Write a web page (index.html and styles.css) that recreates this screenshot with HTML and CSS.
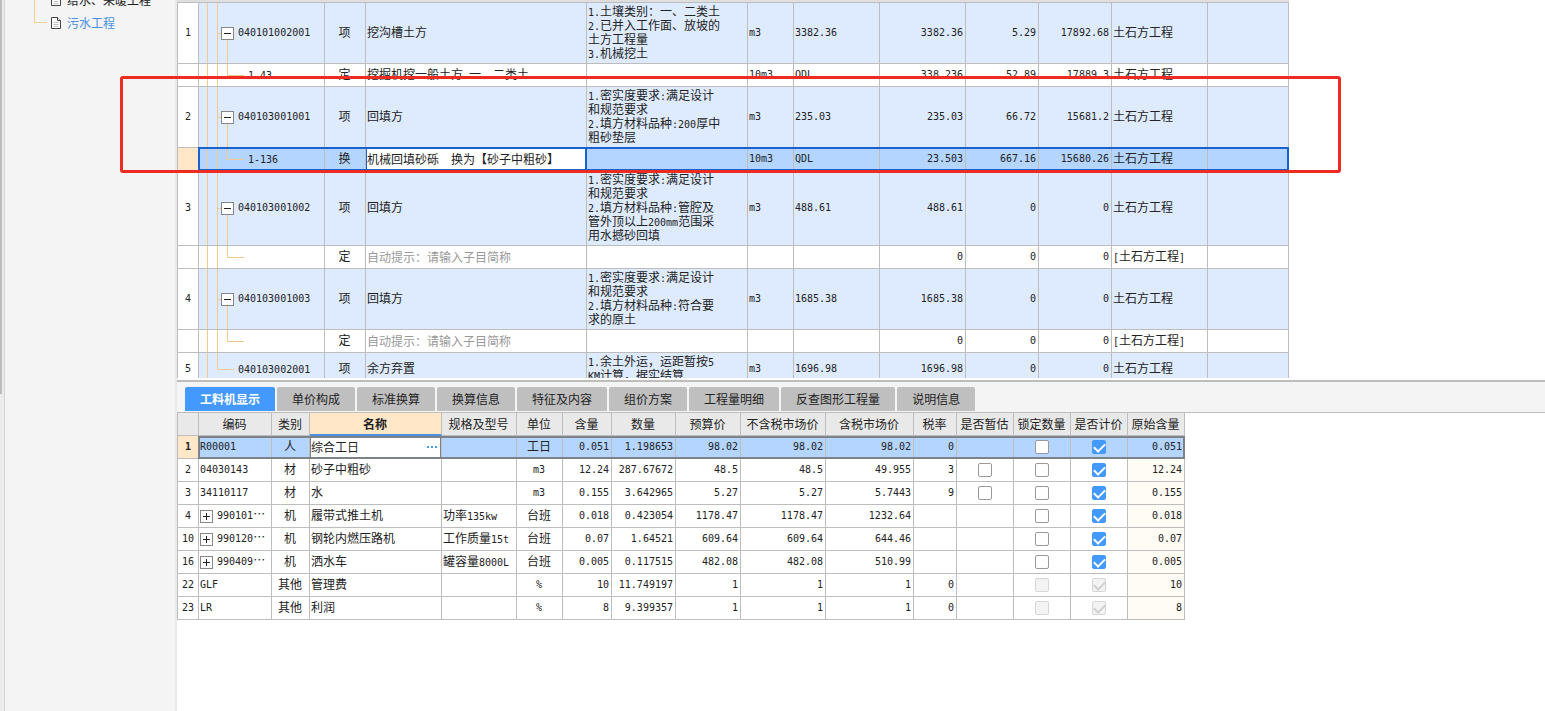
FILE: index.html
```html
<!DOCTYPE html>
<html lang="zh-CN">
<head>
<meta charset="utf-8">
<title>工程计价</title>
<link rel="stylesheet" href="styles.css">
</head>
<body>
<div class="app">
  <div class="rail"><div class="thumb"></div></div>
  <nav class="sidebar" aria-label="工程">
    <ul class="projects">
      <li class="branch"><svg class="doc" viewBox="0 0 10 12"><path d="M.5.5h6l3 3v8h-9z"/><path d="M6.500.5v3h3"/><path class="rule" d="M2.500 5.500h5M2.500 7.500h5M2.500 9.500h5"/></svg><a href="#heating">给水、采暖工程</a></li>
      <li class="branch last"><svg class="doc" viewBox="0 0 10 12"><path d="M.5.5h6l3 3v8h-9z"/><path d="M6.500.5v3h3"/><path class="rule" d="M2.500 5.500h5M2.500 7.500h5M2.500 9.500h5"/></svg><a class="current" href="#sewage">污水工程</a></li>
    </ul>
  </nav>
  <main class="content">
    <section class="bill">
      <div class="strip"></div>
      <table class="grid bill-grid">
        <colgroup><col class="w21"><col class="w126"><col class="w41"><col class="w221"><col class="w161"><col class="w46"><col class="w86"><col class="w86"><col class="w73"><col class="w73"><col class="w96"><col class="w81"></colgroup>
        <tbody>
          <tr class="item tall"><td class="idx">1</td><td class="tree parent"><button class="toggle minus" aria-label="折叠"></button><span class="m">040101002001</span></td><td class="mid">项</td><td>挖沟槽土方</td><td class="desc"><span class="m">1.</span>土壤类别：一、二类土<br><span class="m">2.</span>已并入工作面、放坡的<br>土方工程量<br><span class="m">3.</span>机械挖土</td><td class="m">m3</td><td class="m">3382.36</td><td class="m num">3382.36</td><td class="m num">5.29</td><td class="m num">17892.68</td><td>土石方工程</td><td></td></tr>
          <tr class="line"><td class="idx"></td><td class="tree child"><span class="m">1-43</span></td><td class="mid">定</td><td>挖掘机挖一般土方<span class="m"> </span>一、二类土</td><td></td><td class="m">10m3</td><td class="m">QDL</td><td class="m num">338.236</td><td class="m num">52.89</td><td class="m num">17889.3</td><td>土石方工程</td><td></td></tr>
          <tr class="item tall"><td class="idx">2</td><td class="tree parent"><button class="toggle minus" aria-label="折叠"></button><span class="m">040103001001</span></td><td class="mid">项</td><td>回填方</td><td class="desc"><span class="m">1.</span>密实度要求<span class="m">:</span>满足设计<br>和规范要求<br><span class="m">2.</span>填方材料品种<span class="m">:200</span>厚中<br>粗砂垫层</td><td class="m">m3</td><td class="m">235.03</td><td class="m num">235.03</td><td class="m num">66.72</td><td class="m num">15681.2</td><td>土石方工程</td><td></td></tr>
          <tr class="line selected"><td class="idx"></td><td class="tree child"><span class="m">1-136</span></td><td class="mid">换</td><td class="edit"><input type="text" aria-label="名称" value="机械回填砂砾　换为【砂子中粗砂】"></td><td></td><td class="m">10m3</td><td class="m">QDL</td><td class="m num">23.503</td><td class="m num">667.16</td><td class="m num">15680.26</td><td>土石方工程</td><td></td></tr>
          <tr class="item taller"><td class="idx">3</td><td class="tree parent"><button class="toggle minus" aria-label="折叠"></button><span class="m">040103001002</span></td><td class="mid">项</td><td>回填方</td><td class="desc"><span class="m">1.</span>密实度要求<span class="m">:</span>满足设计<br>和规范要求<br><span class="m">2.</span>填方材料品种<span class="m">:</span>管腔及<br>管外顶以上<span class="m">200mm</span>范围采<br>用水撼砂回填</td><td class="m">m3</td><td class="m">488.61</td><td class="m num">488.61</td><td class="m num">0</td><td class="m num">0</td><td>土石方工程</td><td></td></tr>
          <tr class="line"><td class="idx"></td><td class="tree child"></td><td class="mid">定</td><td class="hint"><input type="text" aria-label="子目简称" placeholder="自动提示：请输入子目简称"></td><td></td><td></td><td></td><td class="m num">0</td><td class="m num">0</td><td class="m num">0</td><td><span class="m">[</span>土石方工程<span class="m">]</span></td><td></td></tr>
          <tr class="item tall"><td class="idx">4</td><td class="tree parent"><button class="toggle minus" aria-label="折叠"></button><span class="m">040103001003</span></td><td class="mid">项</td><td>回填方</td><td class="desc"><span class="m">1.</span>密实度要求<span class="m">:</span>满足设计<br>和规范要求<br><span class="m">2.</span>填方材料品种<span class="m">:</span>符合要<br>求的原土</td><td class="m">m3</td><td class="m">1685.38</td><td class="m num">1685.38</td><td class="m num">0</td><td class="m num">0</td><td>土石方工程</td><td></td></tr>
          <tr class="line"><td class="idx"></td><td class="tree child"></td><td class="mid">定</td><td class="hint"><input type="text" aria-label="子目简称" placeholder="自动提示：请输入子目简称"></td><td></td><td></td><td></td><td class="m num">0</td><td class="m num">0</td><td class="m num">0</td><td><span class="m">[</span>土石方工程<span class="m">]</span></td><td></td></tr>
          <tr class="item short"><td class="idx">5</td><td class="tree leaf"><span class="m">040103002001</span></td><td class="mid">项</td><td>余方弃置</td><td class="desc"><span class="m">1.</span>余土外运，运距暂按<span class="m">5</span><br><span class="m">KM</span>计算，据实结算</td><td class="m">m3</td><td class="m">1696.98</td><td class="m num">1696.98</td><td class="m num">0</td><td class="m num">0</td><td>土石方工程</td><td></td></tr>
        </tbody>
      </table>
    </section>
    <section class="detail">
      <div class="tabs" role="tablist">
        <button role="tab" aria-selected="true" class="tab active">工料机显示</button>
        <button role="tab" class="tab">单价构成</button>
        <button role="tab" class="tab">标准换算</button>
        <button role="tab" class="tab">换算信息</button>
        <button role="tab" class="tab">特征及内容</button>
        <button role="tab" class="tab">组价方案</button>
        <button role="tab" class="tab">工程量明细</button>
        <button role="tab" class="tab">反查图形工程量</button>
        <button role="tab" class="tab">说明信息</button>
      </div>
      <table class="grid res-grid">
        <colgroup><col class="w21"><col class="w73"><col class="w38"><col class="w132"><col class="w75"><col class="w46"><col class="w49"><col class="w64"><col class="w65"><col class="w85"><col class="w88"><col class="w43"><col class="w57"><col class="w57"><col class="w57"><col class="w57"></colgroup>
        <thead>
          <tr><th></th><th>编码</th><th>类别</th><th class="sorted">名称</th><th>规格及型号</th><th>单位</th><th>含量</th><th>数量</th><th>预算价</th><th>不含税市场价</th><th>含税市场价</th><th>税率</th><th>是否暂估</th><th>锁定数量</th><th>是否计价</th><th>原始含量</th></tr>
        </thead>
        <tbody>
          <tr class="selected"><td class="idx">1</td><td class="m">R00001</td><td class="mid">人</td><td class="edit"><div class="field"><input type="text" aria-label="名称" value="综合工日"><button class="more" aria-label="更多"><i></i><i></i><i></i></button></div></td><td></td><td class="mid">工日</td><td class="m num">0.051</td><td class="m num">1.198653</td><td class="m num">98.02</td><td class="m num">98.02</td><td class="m num">98.02</td><td class="m num">0</td><td></td><td class="check"><input type="checkbox" aria-label="锁定数量"></td><td class="check"><input type="checkbox" aria-label="是否计价" checked></td><td class="m num orig">0.051</td></tr>
          <tr><td class="idx">2</td><td class="m">04030143</td><td class="mid">材</td><td>砂子中粗砂</td><td></td><td class="m mid">m3</td><td class="m num">12.24</td><td class="m num">287.67672</td><td class="m num">48.5</td><td class="m num">48.5</td><td class="m num">49.955</td><td class="m num">3</td><td class="check"><input type="checkbox" aria-label="是否暂估"></td><td class="check"><input type="checkbox" aria-label="锁定数量"></td><td class="check"><input type="checkbox" aria-label="是否计价" checked></td><td class="m num orig">12.24</td></tr>
          <tr><td class="idx">3</td><td class="m">34110117</td><td class="mid">材</td><td>水</td><td></td><td class="m mid">m3</td><td class="m num">0.155</td><td class="m num">3.642965</td><td class="m num">5.27</td><td class="m num">5.27</td><td class="m num">5.7443</td><td class="m num">9</td><td class="check"><input type="checkbox" aria-label="是否暂估"></td><td class="check"><input type="checkbox" aria-label="锁定数量"></td><td class="check"><input type="checkbox" aria-label="是否计价" checked></td><td class="m num orig">0.155</td></tr>
          <tr><td class="idx">4</td><td class="code"><button class="toggle plus" aria-label="展开"></button><span class="m">990101</span>⋯</td><td class="mid">机</td><td>履带式推土机</td><td>功率<span class="m">135kw</span></td><td class="mid">台班</td><td class="m num">0.018</td><td class="m num">0.423054</td><td class="m num">1178.47</td><td class="m num">1178.47</td><td class="m num">1232.64</td><td></td><td></td><td class="check"><input type="checkbox" aria-label="锁定数量"></td><td class="check"><input type="checkbox" aria-label="是否计价" checked></td><td class="m num orig">0.018</td></tr>
          <tr><td class="idx">10</td><td class="code"><button class="toggle plus" aria-label="展开"></button><span class="m">990120</span>⋯</td><td class="mid">机</td><td>钢轮内燃压路机</td><td>工作质量<span class="m">15t</span></td><td class="mid">台班</td><td class="m num">0.07</td><td class="m num">1.64521</td><td class="m num">609.64</td><td class="m num">609.64</td><td class="m num">644.46</td><td></td><td></td><td class="check"><input type="checkbox" aria-label="锁定数量"></td><td class="check"><input type="checkbox" aria-label="是否计价" checked></td><td class="m num orig">0.07</td></tr>
          <tr><td class="idx">16</td><td class="code"><button class="toggle plus" aria-label="展开"></button><span class="m">990409</span>⋯</td><td class="mid">机</td><td>洒水车</td><td>罐容量<span class="m">8000L</span></td><td class="mid">台班</td><td class="m num">0.005</td><td class="m num">0.117515</td><td class="m num">482.08</td><td class="m num">482.08</td><td class="m num">510.99</td><td></td><td></td><td class="check"><input type="checkbox" aria-label="锁定数量"></td><td class="check"><input type="checkbox" aria-label="是否计价" checked></td><td class="m num orig">0.005</td></tr>
          <tr><td class="idx">22</td><td class="m">GLF</td><td class="mid">其他</td><td>管理费</td><td></td><td class="m mid">%</td><td class="m num">10</td><td class="m num">11.749197</td><td class="m num">1</td><td class="m num">1</td><td class="m num">1</td><td class="m num">0</td><td></td><td class="check"><input type="checkbox" aria-label="锁定数量" disabled></td><td class="check"><input type="checkbox" aria-label="是否计价" checked disabled></td><td class="m num orig">10</td></tr>
          <tr><td class="idx">23</td><td class="m">LR</td><td class="mid">其他</td><td>利润</td><td></td><td class="m mid">%</td><td class="m num">8</td><td class="m num">9.399357</td><td class="m num">1</td><td class="m num">1</td><td class="m num">1</td><td class="m num">0</td><td></td><td class="check"><input type="checkbox" aria-label="锁定数量" disabled></td><td class="check"><input type="checkbox" aria-label="是否计价" checked disabled></td><td class="m num orig">8</td></tr>
        </tbody>
      </table>
    </section>
  </main>
  <div class="callout"></div>
</div>
</body>
</html>
```
FILE: styles.css
```css
* { box-sizing: border-box; }

body {
  margin: 0;
  background: #fff;
  color: #222;
  font: 12px/14px "Noto Sans CJK SC", sans-serif;
}

button, input { font: inherit; color: inherit; margin: 0; padding: 0; }

.app {
  position: relative;
  display: flex;
  height: 100vh;
  overflow: hidden;
}

.rail {
  flex: none;
  width: 5px;
  background: #ececec;
  border-right: 1px solid #d4d4d4;
}
.thumb { width: 2px; height: 394px; background: #bcbcbc; }

.sidebar {
  flex: none;
  width: 172px;
  background: #f4f4f4;
  border-right: 2px solid #e9e9e9;
  overflow: hidden;
}
.projects { list-style: none; margin: -12px 0 0; padding: 0 0 0 29px; }
.branch {
  display: flex;
  align-items: center;
  height: 23px;
  padding-left: 17px;
  gap: 6px;
  background:
    linear-gradient(#f3cf98, #f3cf98) 0 0 / 1px 100% no-repeat,
    linear-gradient(#f3cf98, #f3cf98) 0 50% / 13px 1px no-repeat;
}
.branch.last {
  background:
    linear-gradient(#f3cf98, #f3cf98) 0 0 / 1px 50% no-repeat,
    linear-gradient(#f3cf98, #f3cf98) 0 50% / 13px 1px no-repeat;
}
.doc { width: 10px; height: 12px; fill: #fff; stroke: #444; stroke-width: 1; }
.doc .rule { stroke: #c4c4c4; }
.branch a { color: #222; text-decoration: none; }
.branch a.current { color: #4a90e2; }

.content {
  flex: 1;
  min-width: 0;
  display: flex;
  flex-direction: column;
}

.bill {
  flex: none;
  height: 378px;
  overflow: hidden;
}
.strip {
  width: 1112px;
  height: 3px;
  background: #dedede;
  border-bottom: 1px solid #bdbdbd;
}

.grid {
  table-layout: fixed;
  width: 0;
  border-collapse: separate;
  border-spacing: 0;
  border-left: 1px solid #bdbdbd;
}
.grid td, .grid th {
  height: 23px;
  padding: 0 2px 2px 1px;
  border-right: 1px solid #bdbdbd;
  border-bottom: 1px solid #bdbdbd;
  font-weight: 400;
  text-align: left;
  white-space: nowrap;
  vertical-align: middle;
}

.w21 { width: 21px; } .w38 { width: 38px; } .w41 { width: 41px; }
.w43 { width: 43px; } .w46 { width: 46px; } .w49 { width: 49px; }
.w57 { width: 57px; } .w64 { width: 64px; } .w65 { width: 65px; }
.w73 { width: 73px; } .w75 { width: 75px; } .w81 { width: 81px; }
.w85 { width: 85px; } .w86 { width: 86px; } .w88 { width: 88px; }
.w96 { width: 96px; } .w126 { width: 126px; } .w132 { width: 132px; }
.w161 { width: 161px; } .w221 { width: 221px; }

.grid .m { font-family: "DejaVu Sans Mono", "Noto Sans CJK SC", monospace; font-size: 10px; }
.grid td.m { padding-bottom: 0; }
.grid span.m { line-height: 1; white-space: pre; }
.grid .num { text-align: right; }
.grid .mid { text-align: center; }
.grid .check { padding: 0; }
.grid .idx {
  padding: 0;
  background: #fff;
  font-family: "DejaVu Sans Mono", monospace;
  font-size: 10px;
  text-align: center;
}

.item td { background-color: #deebff; }
.grid .tall td { height: 61px; }
.grid .taller td { height: 75px; }
.grid .short td { height: 33px; }
.grid .short .desc { padding-top: 1px; padding-bottom: 0; vertical-align: top; }

.tree { background-repeat: no-repeat; }
.grid .parent {
  padding-left: 22px;
  background-image: linear-gradient(#f4c98c, #f4c98c), linear-gradient(#f4c98c, #f4c98c), linear-gradient(#f4c98c, #f4c98c), linear-gradient(#f4c98c, #f4c98c);
  background-size: 1px 100%, 1px 100%, 5px 1px, 1px 50%;
  background-position: 8px 0, 18px 0, 18px 50%, 28px 100%;
}
.grid .child {
  padding-left: 49px;
  background-image: linear-gradient(#f4c98c, #f4c98c), linear-gradient(#f4c98c, #f4c98c), linear-gradient(#f4c98c, #f4c98c), linear-gradient(#f4c98c, #f4c98c);
  background-size: 1px 100%, 1px 100%, 1px 50%, 17px 1px;
  background-position: 8px 0, 18px 0, 28px 0, 28px 50%;
}
.grid .leaf {
  padding-left: 39px;
  background-image: linear-gradient(#f4c98c, #f4c98c), linear-gradient(#f4c98c, #f4c98c), linear-gradient(#f4c98c, #f4c98c);
  background-size: 1px 100%, 1px 50%, 17px 1px;
  background-position: 8px 0, 18px 0, 18px 50%;
}

.toggle {
  width: 13px;
  height: 13px;
  margin-right: 4px;
  border: 1px solid #868686;
  border-radius: 0;
  vertical-align: middle;
  background: linear-gradient(#222, #222) center / 7px 1px no-repeat #fff;
}
.toggle.plus {
  background:
    linear-gradient(#222, #222) center / 7px 1px no-repeat,
    linear-gradient(#222, #222) center / 1px 7px no-repeat #fff;
}

.selected { position: relative; }
.selected td { background-color: #b3d5ff; }
.grid .selected .idx { background: #ffe7c8; }
.selected::after {
  content: "";
  position: absolute;
  inset: -1px 0 0 20px;
  border: 2px solid #1762cc;
  pointer-events: none;
}
.grid .selected .edit { padding: 0; background: #fff; }
.grid input[type="text"] {
  display: block;
  width: 100%;
  height: 20px;
  border: 0;
  outline: 0;
  background: transparent;
}
.bill-grid .edit input[type="text"] {
  height: 22px;
  padding: 0 0 2px;
  border-left: 1px solid #1762cc;
  border-right: 1px solid #1762cc;
}
.bill-grid .selected .edit { border-right-color: #1762cc; }
.hint input::placeholder { color: #999; opacity: 1; }

.detail { border-top: 2px solid #bdbdbd; margin-top: 2px; }
.tabs {
  display: flex;
  align-items: flex-end;
  gap: 2px;
  height: 31px;
  padding: 5px 8px 1px;
  background: #f4f4f4;
  border-bottom: 1px solid #bdbdbd;
}
.tab {
  height: 24px;
  padding: 0 15px;
  border: 0;
  border-radius: 2px 2px 0 0;
  background: #bfbfbf;
  color: #222;
  white-space: nowrap;
}
.tab.active { background: #4499ff; color: #fff; font-weight: 700; }

.grid th { padding: 0 1px 0 0; background: #e9e9e9; text-align: center; }
.grid th.sorted {
  background: #ffe7c8;
  border-bottom: 2px solid #4a90e2;
  font-weight: 700;
}
.res-grid .selected::after { inset: 0 0 0 20px; border-color: #7d8288; }
.res-grid .selected .idx { font-weight: 700; }
.res-grid .field {
  display: flex;
  align-items: center;
  height: 22px;
  padding: 0 4px 0 1px;
  box-shadow: inset 1px 0 #7d8288, inset -1px 0 #7d8288;
}
.res-grid .field input[type="text"] { padding-bottom: 2px; }
.more {
  flex: none;
  display: flex;
  gap: 2px;
  padding: 2px 0;
  border: 0;
  background: none;
}
.more i { width: 2px; height: 2px; background: #4a9fdc; }
.orig { background: #fffbf5; }

input[type="checkbox"] {
  appearance: none;
  display: block;
  width: 14px;
  height: 14px;
  margin: 0 auto;
  border: 1px solid #999;
  border-radius: 2px;
  background: #fff;
}
input[type="checkbox"]:checked {
  border-color: #4499ff;
  background: #4499ff;
}
input[type="checkbox"]:checked::before {
  content: "";
  display: block;
  width: 9px;
  height: 5px;
  margin: 2px 0 0 1px;
  border: solid #fff;
  border-width: 0 0 2px 2px;
  transform: rotate(-45deg);
}
input[type="checkbox"]:disabled { border-color: #d6d6d6; background: #f3f3f3; }
input[type="checkbox"]:checked:disabled::before { border-color: #cfcfcf; }

.callout {
  position: absolute;
  left: 120px;
  top: 76px;
  width: 1221px;
  height: 97px;
  border: 3px solid #ee2b20;
  border-radius: 3px;
  pointer-events: none;
}
```
